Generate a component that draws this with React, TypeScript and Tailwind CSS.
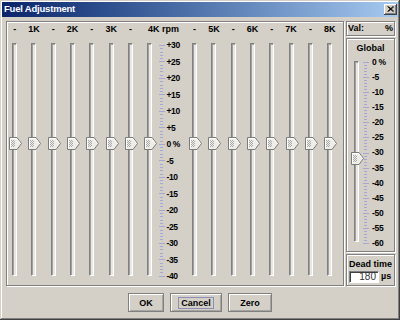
const leftLabels = ["-", "1K", "-", "2K", "-", "3K", "-", "4K rpm"];
const rightLabels = ["-", "5K", "-", "6K", "-", "7K", "-", "8K"];
const mainScale = ["+30", "+25", "+20", "+15", "+10", "+5", "0 %", "-5", "-10", "-15", "-20", "-25", "-30", "-35", "-40"];
const globalScale = ["0 %", "-5", "-10", "-15", "-20", "-25", "-30", "-35", "-40", "-45", "-50", "-55", "-60"];

const etched = "border border-[#808080] shadow-[1px_1px_0_#ffffff,inset_1px_1px_0_#ffffff]";

function Thumb({ center }: { center: number }) {
  const dots = [
    [2, 3], [4, 3], [3, 4], [5, 4], [2, 5], [4, 5], [3, 6], [5, 6], [2, 7], [4, 7], [3, 8], [5, 8], [2, 9], [4, 9],
  ];
  return (
    <svg
      className="absolute left-[-4px]"
      style={{ top: center - 6.5 }}
      width="13"
      height="13"
      viewBox="0 0 13 13"
    >
      <path d="M0.5 0.5H8L12.5 6.5L8 12.5H0.5Z" fill="#eeede8" stroke="#7b7b7b" />
      <path d="M1.5 11.5V1.5H7.6L11.2 6.5" fill="none" stroke="#ffffff" />
      {dots.map(([x, y], i) => (
        <rect key={i} x={x} y={y} width="1" height="1" fill="#a9a9a9" />
      ))}
    </svg>
  );
}

function Track({ className, center }: { className: string; center: number }) {
  return (
    <div
      className={`relative w-[5px] border border-t-[#808080] border-l-[#808080] border-r-white border-b-white bg-[#e9e7e1] shadow-[inset_1px_1px_0_#a0a0a0] ${className}`}
    >
      <Thumb center={center} />
    </div>
  );
}

function Ticks({ count, span, height }: { count: number; span: number; height: number }) {
  const items = [];
  for (let i = 0; i <= count; i++) {
    const y = Math.round(5 + (i * span) / count) + 0.5;
    const major = i % 5 === 0;
    items.push(<line key={i} x1={major ? 0 : 1} x2={major ? 6 : 4} y1={y} y2={y} stroke="#a3a8d6" />);
  }
  return (
    <svg className="absolute left-0 top-0" width="8" height={height}>
      {items}
    </svg>
  );
}

function SliderCol({ label, wide }: { label: string; wide?: boolean }) {
  // value 0 -> thumb centre, measured from the track's inner top
  const center = 1 + (30 / 70) * 230.7;
  return (
    <div className="flex w-[19.3px] shrink-0 flex-col items-center">
      <div
        className={`mt-[1px] h-[12px] whitespace-nowrap leading-[12px] ${wide ? "self-start pl-[8px]" : ""}`}
      >
        {label}
      </div>
      <Track className="mt-[8px] h-[233px]" center={center} />
    </div>
  );
}

function Button({ children, width, focus }: { children: string; width: string; focus?: boolean }) {
  return (
    <button
      className={`flex h-[19px] items-center justify-center border border-[#808080] bg-[#d4d0c8] shadow-[inset_1px_1px_0_#ffffff,inset_-1px_-1px_0_#a8a5a0] ${width}`}
    >
      <span className={`px-[2px] leading-[10px] ${focus ? "outline outline-1 outline-[#8e8eb4]" : ""}`}>
        {children}
      </span>
    </button>
  );
}

export default function App() {
  const globalCenter = 1 + (32 / 60) * 181 - 1;
  return (
    <div className="h-[320px] w-[400px] bg-[#d4d0c8] p-[2px] font-['Liberation_Sans',Arial,sans-serif] text-[9px] font-bold text-black shadow-[inset_-1px_-1px_0_#404040,inset_1px_1px_0_#d4d0c8,inset_-2px_-2px_0_#808080,inset_2px_2px_0_#ffffff]">
      <div className="flex h-[15px] items-center justify-between bg-linear-to-r from-[#0a246a] to-[#a6caf0] pl-[2px] pr-[1px]">
        <span className="text-[9.5px] tracking-[-0.2px] text-white">Fuel Adjustment</span>
        <div className="flex h-[11px] w-[13px] items-center justify-center bg-[#d4d0c8] shadow-[inset_-1px_-1px_0_#404040,inset_1px_1px_0_#ffffff,inset_-2px_-2px_0_#808080]">
          <svg width="7" height="6" viewBox="0 0 7 6" className="mb-[1px] mr-[1px]">
            <path d="M0.5 0.5L6 5.5M1.5 0.5L7 5.5M6 0.5L0.5 5.5M7 0.5L1.5 5.5" stroke="#000" strokeWidth="0.9" />
          </svg>
        </div>
      </div>

      <div className="flex gap-[2px] pl-[4px] pr-[3px] pt-[4px]">
        <div className={`h-[265px] flex-1 ${etched}`}>
          <div className="ml-[-2px] flex">
            {leftLabels.map((l, i) => (
              <SliderCol key={i} label={l} wide={l === "4K rpm"} />
            ))}
            <div className="flex w-[25.6px] shrink-0 flex-col">
              <div className="mt-[1px] h-[12px]" />
              <div className="relative mt-[5px] flex h-[241px] flex-col justify-between pl-[7px] text-[8.5px] tracking-[-0.3px]">
                <Ticks count={70} span={230.7} height={241} />
                {mainScale.map((s) => (
                  <div key={s} className="h-[10px] whitespace-nowrap leading-[10px]">
                    {s}
                  </div>
                ))}
              </div>
            </div>
            {rightLabels.map((l, i) => (
              <SliderCol key={i} label={l} />
            ))}
          </div>
        </div>

        <div className="flex h-[265px] w-[49px] flex-col gap-[2px]">
          <div className={`flex h-[15px] items-center justify-between pl-[1px] pr-[1px] ${etched}`}>
            <span>Val:</span>
            <span>%</span>
          </div>
          <div className={`flex flex-1 flex-col ${etched}`}>
            <div className="mt-[3px] h-[12px] text-center leading-[12px]">Global</div>
            <div className="mt-[3px] flex">
              <div className="ml-[5px] flex w-[8px] justify-center pt-[4px]">
                <Track className="h-[181px]" center={globalCenter} />
              </div>
              <div className="relative ml-[3px] flex h-[191px] flex-col justify-between pl-[9px] text-[8.5px] tracking-[-0.3px]">
                <Ticks count={60} span={181} height={191} />
                {globalScale.map((s) => (
                  <div key={s} className="h-[10px] whitespace-nowrap leading-[10px]">
                    {s}
                  </div>
                ))}
              </div>
            </div>
          </div>
          <div className={`flex h-[32px] flex-col ${etched}`}>
            <div className="mt-[4px] h-[10px] text-center leading-[10px]">Dead time</div>
            <div className="ml-[2px] mt-[1px] flex items-center">
              <div className="flex h-[12px] w-[30px] items-center justify-end border border-t-[#808080] border-l-[#808080] border-r-white border-b-white bg-white pr-[2px] text-[10px] font-normal text-[#333333] shadow-[inset_1px_1px_0_#404040]">
                180
              </div>
              <span className="ml-[2px]">µs</span>
            </div>
          </div>
        </div>
      </div>

      <div className="mt-[7px] flex justify-center gap-[6px]">
        <Button width="w-[36px]">OK</Button>
        <Button width="w-[52px]" focus>
          Cancel
        </Button>
        <Button width="w-[44px]">Zero</Button>
      </div>
    </div>
  );
}
